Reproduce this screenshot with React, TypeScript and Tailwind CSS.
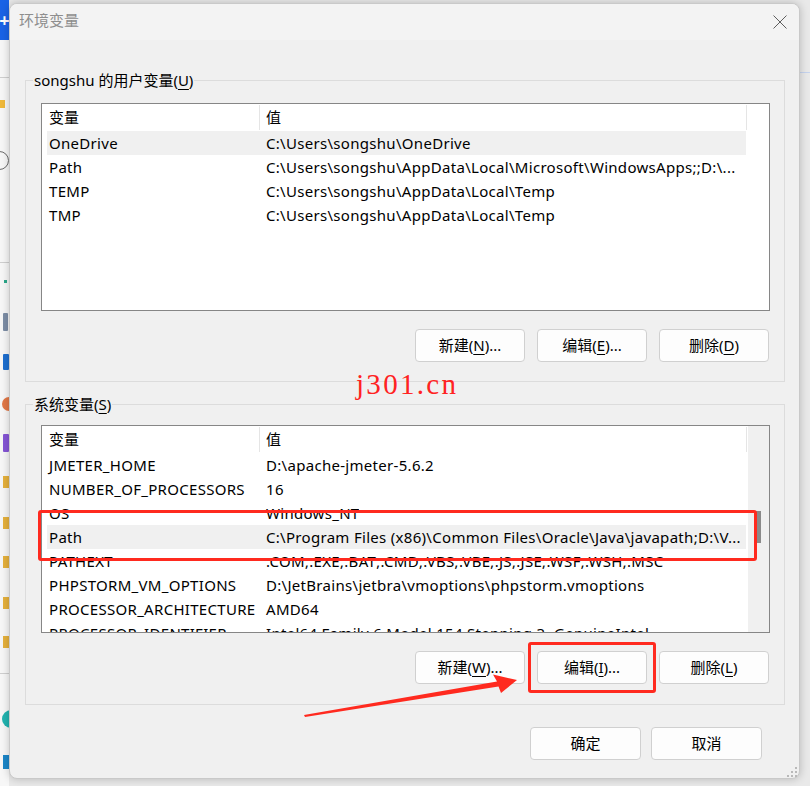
import React from 'react'

const userVars: [string, string][] = [
  ['OneDrive', 'C:\\Users\\songshu\\OneDrive'],
  ['Path', 'C:\\Users\\songshu\\AppData\\Local\\Microsoft\\WindowsApps;;D:\\...'],
  ['TEMP', 'C:\\Users\\songshu\\AppData\\Local\\Temp'],
  ['TMP', 'C:\\Users\\songshu\\AppData\\Local\\Temp'],
]

const sysVars: [string, string][] = [
  ['JMETER_HOME', 'D:\\apache-jmeter-5.6.2'],
  ['NUMBER_OF_PROCESSORS', '16'],
  ['OS', 'Windows_NT'],
  ['Path', 'C:\\Program Files (x86)\\Common Files\\Oracle\\Java\\javapath;D:\\V...'],
  ['PATHEXT', '.COM;.EXE;.BAT;.CMD;.VBS;.VBE;.JS;.JSE;.WSF;.WSH;.MSC'],
  ['PHPSTORM_VM_OPTIONS', 'D:\\JetBrains\\jetbra\\vmoptions\\phpstorm.vmoptions'],
  ['PROCESSOR_ARCHITECTURE', 'AMD64'],
  ['PROCESSOR_IDENTIFIER', 'Intel64 Family 6 Model 154 Stepping 3, GenuineIntel'],
]

function Header() {
  return (
    <div className="flex h-[27px] items-center">
      <div className="w-[217px] pl-[7px]">变量</div>
      <div className="h-[25px] w-px bg-[#e5e5e5]" />
      <div className="w-[486px] pl-[6px]">值</div>
      <div className="h-[25px] w-px bg-[#e5e5e5]" />
    </div>
  )
}

function VarRow({ name, value, selected }: { name: string; value: string; selected?: boolean }) {
  return (
    <div className={`ml-[5px] flex h-[24px] w-[699px] items-center whitespace-nowrap tracking-[0.3px] ${selected ? 'bg-[#f0f0f0]' : ''}`}>
      <div className="w-[212px] overflow-hidden pl-[2px]">{name}</div>
      <div className="overflow-hidden pl-[7px]">{value}</div>
    </div>
  )
}

function Btn({ children, wide }: { children: React.ReactNode; wide?: boolean }) {
  return (
    <div className={`flex h-[33px] ${wide ? 'w-[111px]' : 'w-[110px]'} items-center justify-center rounded-[4px] border border-[#d0d0d0] bg-[#fdfdfd]`}>
      {children}
    </div>
  )
}

function Key({ k }: { k: string }) {
  return <span className="underline underline-offset-[3px]">{k}</span>
}

export default function App() {
  return (
    <div className="relative h-[786px] w-[810px] overflow-hidden bg-[#e9e9e9] font-['Noto_Sans','Noto_Sans_CJK_SC',sans-serif] text-[15px] text-black">
      {/* bits of the desktop behind the dialog */}
      <div className="absolute left-0 top-0 flex h-[40px] w-[9px] items-center justify-center bg-[#1a63e6] text-[18px] font-bold leading-none text-white">+</div>
      <div className="absolute left-0 top-[40px] h-[746px] w-[9px] bg-[#f7f7f7]" />
      <div className="absolute left-0 top-[77px] h-px w-[9px] bg-[#cfcfcf]" />
      <div className="absolute left-0 top-[100px] h-[8px] w-[5px] bg-[#f0b93a]" />
      <div className="absolute left-[-10px] top-[151px] h-[19px] w-[19px] rounded-full border border-[#6b6b6b]" />
      <div className="absolute left-0 top-[262px] h-px w-[9px] bg-[#cfcfcf]" />
      <div className="absolute left-[4px] top-[280px] h-[3px] w-[3px] bg-[#2aa88a]" />
      <div className="absolute left-[3px] top-[313px] h-[18px] w-[5px] rounded-[1px] bg-[#7d8ea6]" />
      <div className="absolute left-[3px] top-[354px] h-[16px] w-[6px] rounded-[1px] bg-[#1d6fd0]" />
      <div className="absolute left-[2px] top-[397px] h-[14px] w-[14px] rounded-full bg-[#e27847]" />
      <div className="absolute left-[3px] top-[434px] h-[18px] w-[6px] rounded-[1px] bg-[#8555d6]" />
      <div className="absolute left-[3px] top-[476px] h-[12px] w-[6px] bg-[#e6b13c]" />
      <div className="absolute left-[3px] top-[517px] h-[12px] w-[6px] bg-[#e6b13c]" />
      <div className="absolute left-[3px] top-[556px] h-[12px] w-[6px] bg-[#e6b13c]" />
      <div className="absolute left-[3px] top-[597px] h-[12px] w-[6px] bg-[#e6b13c]" />
      <div className="absolute left-[3px] top-[636px] h-[12px] w-[6px] bg-[#e6b13c]" />
      <div className="absolute left-0 top-[673px] h-px w-[9px] bg-[#cfcfcf]" />
      <div className="absolute left-[2px] top-[710px] h-[18px] w-[18px] rounded-full bg-[#22b4b0]" />
      <div className="absolute left-[3px] top-[755px] h-[14px] w-[6px] bg-[#1b86c8]" />
      <div className="absolute left-[800px] top-[72px] h-px w-[10px] bg-[#c5d3ee]" />

      <div className="flex pl-[9px] pt-[3px]">
        <div className="relative flex h-[776px] w-[791px] flex-col overflow-hidden rounded-[8px] border border-[#c9c9c9] bg-[#f0f0f0] shadow-[0_0_8px_rgba(0,0,0,0.22)]">
          {/* title bar */}
          <div className="flex h-[36px] items-center justify-between bg-[#f3f3f3] pb-[3px] pl-[9px] pr-[12px]">
            <span className="text-[#8e8e8e]">环境变量</span>
            <svg width="14" height="14" viewBox="0 0 14 14" className="mt-[2px]">
              <path d="M0.5 0.5 L13.5 13.5 M13.5 0.5 L0.5 13.5" stroke="#5e5e5e" strokeWidth="1" fill="none" />
            </svg>
          </div>

          <div className="flex flex-col pl-[15px] pr-[14px] pt-[30px]">
            {/* user variables */}
            <fieldset className="border border-[#dcdcdc]">
              <legend className="ml-[7px] px-[1px] leading-[20px]">
                songshu 的用户变量(<Key k="U" />)
              </legend>
              <div className="flex flex-col pb-[19px] pl-[15px] pr-[14px] pt-[13px]">
                <div className="h-[208px] overflow-hidden border border-[#868686] bg-white">
                  <Header />
                  {userVars.map(([n, v], i) => (
                    <VarRow key={n} name={n} value={v} selected={i === 0} />
                  ))}
                </div>
                <div className="mt-[18px] flex justify-end gap-[12px] pr-[1px]">
                  <Btn>新建(<Key k="N" />)...</Btn>
                  <Btn>编辑(<Key k="E" />)...</Btn>
                  <Btn>删除(<Key k="D" />)</Btn>
                </div>
              </div>
            </fieldset>

            {/* system variables */}
            <fieldset className="mt-[12px] border border-[#dcdcdc]">
              <legend className="ml-[7px] px-[1px] leading-[20px]">
                系统变量(<Key k="S" />)
              </legend>
              <div className="flex flex-col pb-[20px] pl-[15px] pr-[14px] pt-[11px]">
                <div className="flex h-[208px] overflow-hidden border border-[#868686] bg-white">
                  <div className="w-[706px] overflow-hidden">
                    <Header />
                    {sysVars.map(([n, v]) => (
                      <VarRow key={n} name={n} value={v} selected={n === 'Path'} />
                    ))}
                  </div>
                  <div className="flex w-[21px] justify-center bg-[#f0f0f0]">
                    <div className="mt-[85px] h-[32px] w-[5px] bg-[#8a8a8a]" />
                  </div>
                </div>
                <div className="mt-[18px] flex justify-end gap-[12px] pr-[1px]">
                  <Btn>新建(<Key k="W" />)...</Btn>
                  <Btn>编辑(<Key k="I" />)...</Btn>
                  <Btn>删除(<Key k="L" />)</Btn>
                </div>
              </div>
            </fieldset>

            <div className="mt-[22px] flex justify-end gap-[10px] pr-[23px]">
              <Btn wide>确定</Btn>
              <Btn wide>取消</Btn>
            </div>
          </div>
        </div>
      </div>

      {/* watermark */}
      <div className="absolute left-[356px] top-[367px] font-['Liberation_Serif',serif] text-[29px] leading-[34px] tracking-[2.3px] text-[#ff2222]">
        j301.cn
      </div>

      {/* annotations */}
      <div className="absolute left-[38px] top-[510px] h-[51px] w-[719px] rounded-[3px] border-[3px] border-[#ff2a1f]" />
      <div className="absolute left-[528px] top-[642px] h-[51px] w-[128px] rounded-[3px] border-[3px] border-[#ff2a1f]" />
      <svg className="pointer-events-none absolute left-0 top-0" width="810" height="786">
        <polygon points="304,715 497,681.5 493,674.5 517,680 501,693 498.5,686.5 305,717" fill="#ff2a1f" />
        <g fill="#b9b9b9">
          <rect x="795" y="767" width="2" height="2" />
          <rect x="791" y="771" width="2" height="2" />
          <rect x="795" y="771" width="2" height="2" />
          <rect x="787" y="775" width="2" height="2" />
          <rect x="791" y="775" width="2" height="2" />
          <rect x="795" y="775" width="2" height="2" />
        </g>
      </svg>
    </div>
  )
}
